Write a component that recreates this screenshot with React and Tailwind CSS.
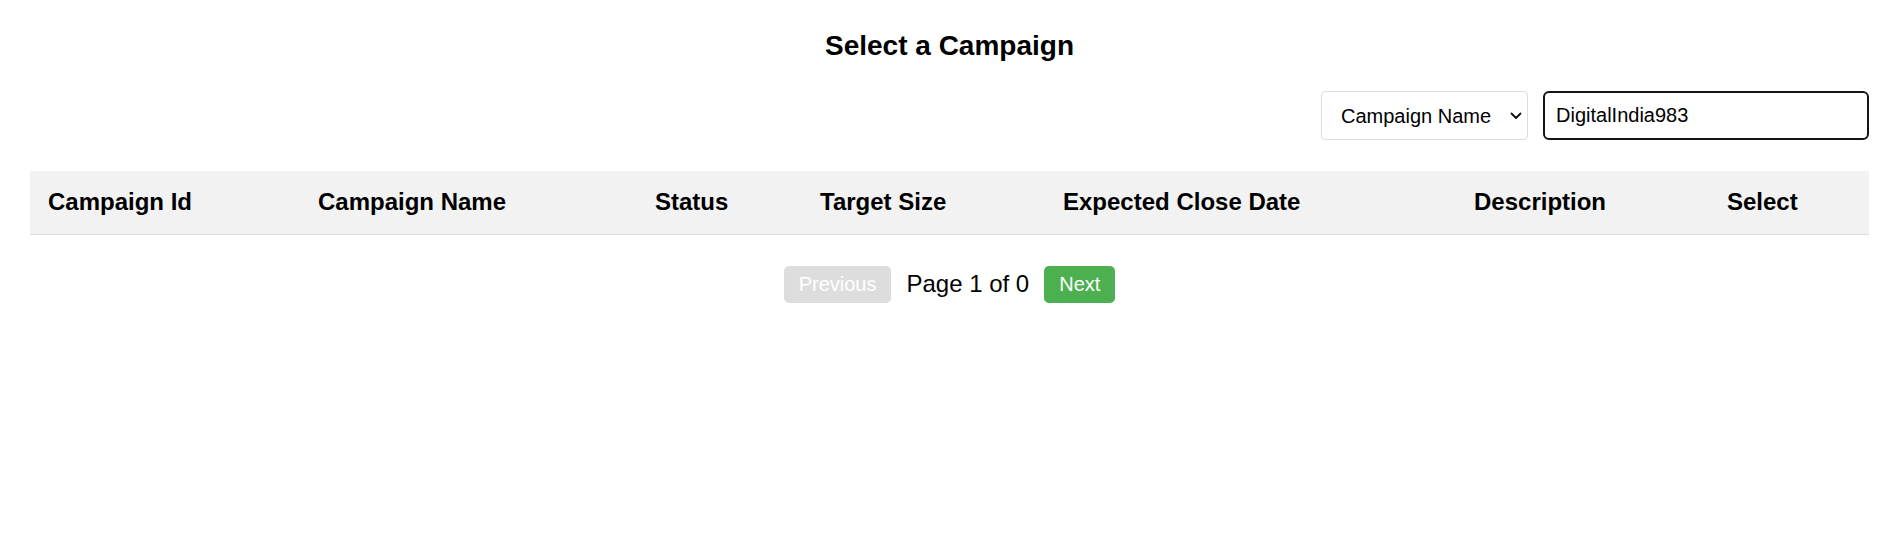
import React, { useState } from 'react';

const columns = [
  { label: 'Campaign Id', width: 'w-[270px]' },
  { label: 'Campaign Name', width: 'w-[337px]' },
  { label: 'Status', width: 'w-[165px]' },
  { label: 'Target Size', width: 'w-[243px]' },
  { label: 'Expected Close Date', width: 'w-[411px]' },
  { label: 'Description', width: 'w-[253px]' },
  { label: 'Select', width: '' },
];

const App = () => {
  const [searchBy, setSearchBy] = useState('name');
  const [query, setQuery] = useState('DigitalIndia983');

  return (
    <div className="min-h-[536px] bg-white px-[30px] pt-[30px] text-black font-['Liberation_Sans',Arial,sans-serif]">
      <h2 className="text-center text-[28px] leading-[32px] font-bold">Select a Campaign</h2>

      <div className="mt-[29px] flex justify-end gap-[15px]">
        <div className="relative">
          <select
            value={searchBy}
            onChange={(e) => setSearchBy(e.target.value)}
            className="h-[49px] w-[207px] appearance-none rounded-[4px] border border-[#dcdcdc] bg-white pl-[19px] pr-[30px] text-[20px]"
          >
            <option value="name">Campaign Name</option>
            <option value="id">Campaign Id</option>
            <option value="status">Status</option>
          </select>
          {/* dropdown chevron */}
          <svg
            viewBox="0 0 12 8"
            className="pointer-events-none absolute right-[6px] top-[21px] h-[8px] w-[12px]"
            fill="none"
            stroke="#111"
            strokeWidth="1.8"
            strokeLinecap="round"
            strokeLinejoin="round"
          >
            <path d="M1.5 1.5L6 6L10.5 1.5" />
          </svg>
        </div>
        <input
          type="text"
          value={query}
          onChange={(e) => setQuery(e.target.value)}
          className="h-[49px] w-[326px] rounded-[6px] border-2 border-[#141414] px-[11px] text-[20px] outline-none"
        />
      </div>

      <table className="mt-[31px] w-full table-fixed border-collapse">
        <thead>
          <tr className="h-[63px] border-b border-[#dddddd] bg-[#f2f2f2]">
            {columns.map((col) => (
              <th key={col.label} className={`${col.width} px-[18px] text-left text-[24px] font-bold`}>
                {col.label}
              </th>
            ))}
          </tr>
        </thead>
        <tbody />
      </table>

      <div className="mt-[31px] flex items-center justify-center gap-[15px]">
        <button
          disabled
          className="h-[37px] rounded-[5px] bg-[#dddddd] px-[15px] text-[20px] text-white"
        >
          Previous
        </button>
        <span className="text-[24px]">Page 1 of 0</span>
        <button className="h-[37px] rounded-[5px] bg-[#4caf50] px-[15px] text-[20px] text-white">
          Next
        </button>
      </div>
    </div>
  );
};

export default App;
